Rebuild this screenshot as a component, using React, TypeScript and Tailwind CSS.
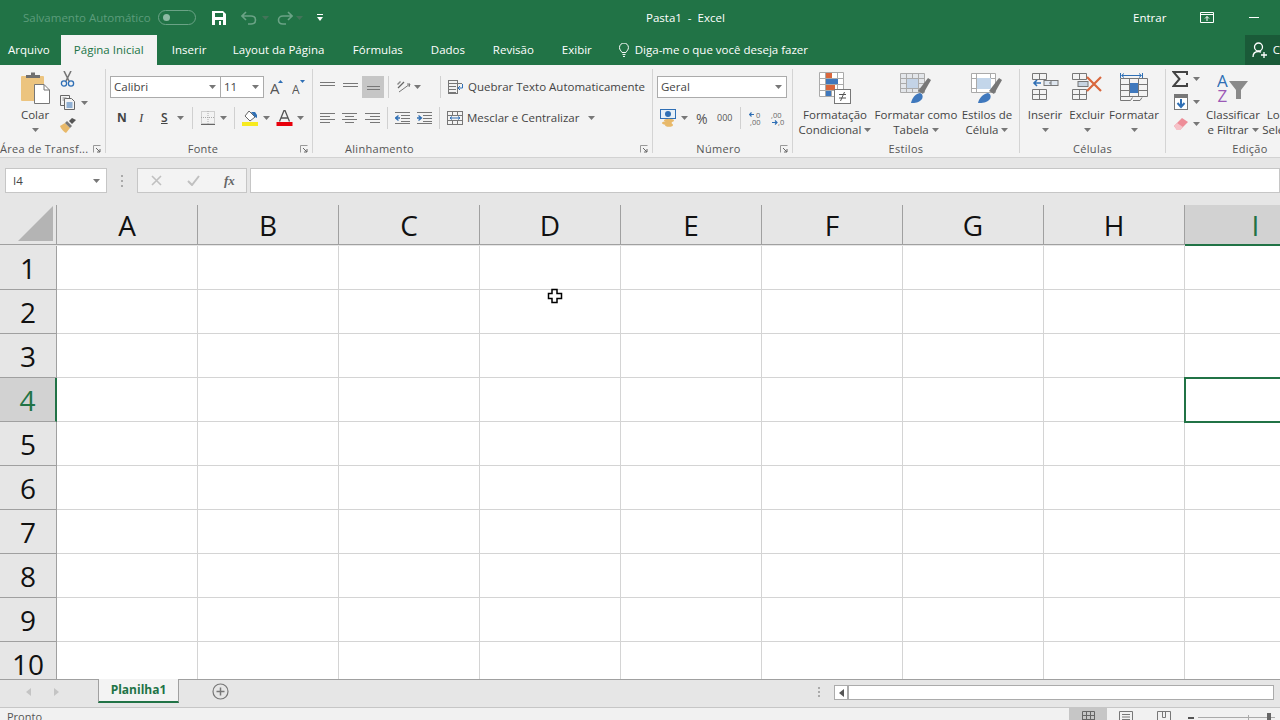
const columns = ['A', 'B', 'C', 'D', 'E', 'F', 'G', 'H', 'I'];
const rows = [1, 2, 3, 4, 5, 6, 7, 8, 9, 10];

const Caret = ({ className = '' }: { className?: string }) => (
  <svg width="7" height="4" viewBox="0 0 7 4" className={`shrink-0 ${className}`}>
    <path d="M0 0h7L3.5 4z" fill="#777" />
  </svg>
);

const Launcher = () => (
  <svg width="8" height="8" viewBox="0 0 8 8" className="shrink-0">
    <path d="M0.5 7.5V0.5H7.5" fill="none" stroke="#999" />
    <path d="M3 3l4 4M7 4v3H4" fill="none" stroke="#666" />
  </svg>
);

const VSep = ({ className = '' }: { className?: string }) => <div className={`h-[22px] w-px shrink-0 bg-[#d0d0d0] ${className}`} />;

function Group({ label, launcher, labelClass = '', className, children }: { label: string; launcher?: boolean; labelClass?: string; className: string; children: React.ReactNode }) {
  return (
    <div className={`flex h-[84px] shrink-0 flex-col border-r border-[#d4d4d4] ${className}`}>
      <div className="h-[73px] shrink-0">{children}</div>
      <div className="flex h-[14px] items-center">
        <div className={`flex-1 text-center text-[11px] leading-[14px] tracking-[0.3px] whitespace-nowrap text-[#555] ${labelClass}`}>{label}</div>
        {launcher && <div className="mr-[4px] flex w-[8px] items-center"><Launcher /></div>}
      </div>
    </div>
  );
}

function BigButton({ icon, lines, caret, className }: { icon: React.ReactNode; lines: string[]; caret?: boolean; className: string }) {
  return (
    <div className={`flex shrink-0 flex-col items-center ${className}`}>
      <div className="mt-[3px] mb-[4px] flex h-[31px] items-center justify-center">{icon}</div>
      {lines.map((line, i) => (
        <div key={i} className="flex h-[15px] items-center gap-[3px] text-[11.5px] leading-[15px] whitespace-nowrap text-[#444]">
          {line}
          {i === 1 && caret && <Caret />}
        </div>
      ))}
      {lines.length === 1 && <div className="flex h-[15px] items-center"><Caret /></div>}
    </div>
  );
}

const PasteIcon = () => (
  <svg width="30" height="32" viewBox="0 0 30 32">
    <rect x="1" y="4" width="23" height="25" rx="1" fill="#ecc47f" />
    <path d="M6 5V3h5V0.5h4V3h5v3H6z" fill="#6f6f6f" />
    <path d="M14.5 12.5H24l5.5 5.5V31.5H14.5z" fill="#fff" stroke="#777" />
    <path d="M24 12.5V18h5.5" fill="none" stroke="#777" />
  </svg>
);
const CutIcon = () => (
  <svg width="15" height="16" viewBox="0 0 15 16">
    <path d="M4 0l5 10M11 0L6 10" stroke="#777" strokeWidth="1.6" />
    <circle cx="4" cy="12.5" r="2.6" fill="none" stroke="#2f6fb5" strokeWidth="1.3" />
    <circle cx="11" cy="12.5" r="2.6" fill="none" stroke="#2f6fb5" strokeWidth="1.3" />
  </svg>
);
const CopyIcon = () => (
  <svg width="15" height="15" viewBox="0 0 15 15" fill="none" stroke="#666">
    <path d="M9.5 3V0.5H0.5v10H4" />
    <path d="M4.5 3.5h7l3 3v8h-10z" fill="#f3f3f3" />
    <path d="M6.5 8h6M6.5 10h6M6.5 12h6" stroke="#2f6fb5" />
    <path d="M2.5 3h4M2.5 5h2" stroke="#888" />
  </svg>
);
const BrushIcon = () => (
  <svg width="16" height="15" viewBox="0 0 16 15">
    <path d="M0 8l5-3 5 5-4 5C4 14 1 11 0 8z" fill="#e8b96a" />
    <path d="M5 5l5 5 2-2-5-5z" fill="#777" />
    <path d="M9 3l3-3 4 2-4 4z" fill="#555" />
  </svg>
);
const GrowIcon = ({ small }: { small?: boolean }) => (
  <svg width="14" height="16" viewBox="0 0 14 16">
    <path d={small ? 'M8 1h5L10.500 4z' : 'M8 4l2.500-3L13 4z'} fill="#2f6fb5" />
    <text x="0" y="15" fontSize={small ? 12 : 15} fill="#555" fontFamily="Open Sans, sans-serif">A</text>
  </svg>
);
const BordersIcon = () => (
  <svg width="14" height="14" viewBox="0 0 14 14" fill="none" stroke="#aaa" strokeDasharray="1 1">
    <rect x="0.5" y="0.5" width="13" height="12" />
    <path d="M7 0v13M0 6.500h14" />
    <path d="M0 13.500h14" stroke="#666" strokeDasharray="none" />
  </svg>
);
const FillIcon = () => (
  <svg width="17" height="17" viewBox="0 0 17 17">
    <path d="M7 1l6 6-5 4-5-5z" fill="#fff" stroke="#666" />
    <path d="M9 2h4l2 3v3l-2-1z" fill="#2f6fb5" />
    <rect x="0" y="12" width="16" height="4" fill="#f7ea1f" />
  </svg>
);
const FontColorIcon = () => (
  <svg width="17" height="17" viewBox="0 0 17 17">
    <path d="M3.500 11.500L8 0.500h1l4.500 11M5.300 8h6.400" fill="none" stroke="#555" strokeWidth="1.300" />
    <rect x="0.500" y="12" width="16" height="4" fill="#e8000b" />
  </svg>
);
const Lines = ({ offsets, width = 15 }: { offsets: [number, number][]; width?: number }) => (
  <svg width={width} height="12" viewBox={`0 0 ${width} 12`} stroke="#777">
    {offsets.map(([x1, x2], i) => <path key={i} d={`M${x1} ${i * 3 + 1.5}H${x2}`} />)}
  </svg>
);
const OrientIcon = () => (
  <svg width="16" height="16" viewBox="0 0 16 16" fill="none">
    <path d="M2 9L8 3" stroke="#666" strokeWidth="1.200" />
    <path d="M3 13L14 5M14 5l-3 0M14 5l-1 3" stroke="#777" />
    <path d="M1 5l3-3 1 1-3 3z" fill="#888" />
  </svg>
);
const IndentIcon = ({ flip }: { flip?: boolean }) => (
  <svg width="15" height="12" viewBox="0 0 15 12" className={flip ? '' : ''}>
    <path d="M0 .5h15M6 3.500h9M6 6.500h9M6 9.500h9M0 11.500h15" stroke="#777" />
    <path d={flip ? 'M0 6h3.500M1.500 3.500L4.500 6l-3 2.500' : 'M5 6H1.500M3.500 3.500L.5 6l3 2.500'} stroke="#2f6fb5" strokeWidth="1.300" fill="none" />
  </svg>
);
const WrapIcon = () => (
  <svg width="16" height="14" viewBox="0 0 16 14" fill="none" stroke="#777">
    <path d="M1 .5h9M1 3.500h13M1 6.500h7M1 9.500h7M1 12.500h7" />
    <rect x="0.500" y="0.500" width="9" height="13" />
    <path d="M14.500 4v4H10M12 6l-2 2 2 2" stroke="#2f6fb5" />
  </svg>
);
const MergeIcon = () => (
  <svg width="16" height="14" viewBox="0 0 16 14" fill="none" stroke="#777">
    <rect x="0.500" y="0.500" width="15" height="13" />
    <path d="M0 4.500h16M0 9.500h16M5.500 0v4M5.500 10v4M10.500 0v4M10.500 10v4" />
    <path d="M3 7h10M5 5.500L3 7l2 1.500M11 5.500L13 7l-2 1.500" stroke="#2f6fb5" />
  </svg>
);
const CurrencyIcon = () => (
  <svg width="17" height="18" viewBox="0 0 17 18">
    <rect x="0.500" y="0.500" width="15" height="9" fill="#e6f0f8" stroke="#2f6fb5" />
    <circle cx="8" cy="5" r="3" fill="#2f6fb5" />
    <ellipse cx="9" cy="11.500" rx="5" ry="1.800" fill="#e8b96a" />
    <ellipse cx="7" cy="14" rx="5" ry="1.800" fill="#e8b96a" />
    <ellipse cx="9" cy="16" rx="4" ry="1.800" fill="#e8b96a" />
  </svg>
);
const DecimalIcon = ({ inc }: { inc?: boolean }) => (
  <svg width="15" height="15" viewBox="0 0 15 15">
    <path d={inc ? 'M5 3.500H1M2.500 1.500l-2 2 2 2' : 'M2 11.500h5M5 9.500l2 2-2 2'} stroke="#2f6fb5" fill="none" strokeWidth="1.200" />
    <text x={inc ? 7 : 1} y="6.500" fontSize="7.500" fill="#666" fontFamily="Open Sans, sans-serif">{inc ? '0' : ',00'}</text>
    <text x={inc ? 1 : 8} y="14" fontSize="7.500" fill="#666" fontFamily="Open Sans, sans-serif">{inc ? ',00' : ',0'}</text>
  </svg>
);
const CondFormatIcon = () => (
  <svg width="32" height="32" viewBox="0 0 32 32">
    <path d="M.5.500h24v24H.500zM.5 6.500h24M.5 12.500h24M.5 18.500h24M6.500.500v24M12.500.500v24M18.500.500v24" fill="#fff" stroke="#aaa" />
    <rect x="7" y="1" width="6" height="5" fill="#d9673d" />
    <rect x="7" y="7" width="12" height="5" fill="#3f78bd" />
    <rect x="7" y="13" width="9" height="5" fill="#d9673d" />
    <rect x="7" y="19" width="5" height="5" fill="#3f78bd" />
    <rect x="15.500" y="17.500" width="16" height="14" fill="#fff" stroke="#777" />
    <path d="M20 22.500h7M20 26h7M25.500 20l-4 9" stroke="#555" fill="none" />
  </svg>
);
const TableBrushIcon = () => (
  <svg width="32" height="32" viewBox="0 0 32 32">
    <path d="M.5 1.500h24v19H.500zM.5 6.500h24M.5 11.500h24M.5 16.500h24M6.500 1.500v19M12.500 1.500v19M18.500 1.500v19" fill="#e3e6ea" stroke="#aaa" />
    <rect x="7" y="7" width="11" height="9" fill="#c3d3e6" />
    <path d="M18 19L28 6l3 2-8 14z" fill="#777" />
    <path d="M11 31c1-5 4-9 9-10 3 1 3 4 2 6-3 4-7 4-11 4z" fill="#3f78bd" />
  </svg>
);
const CellBrushIcon = () => (
  <svg width="32" height="32" viewBox="0 0 32 32">
    <path d="M.5 1.500h24v19H.500zM.5 6.500h5M19.500 6.500h5M.5 16.500h5M5.500 1.500v19M19.500 1.500v5" fill="#fff" stroke="#aaa" />
    <rect x="6" y="6" width="14" height="11" fill="#c3d6ea" />
    <path d="M18 19L28 6l3 2-8 14z" fill="#777" />
    <path d="M7 31c1-5 5-9 10-10 3 1 3 4 2 6-3 4-8 4-12 4z" fill="#3f78bd" />
  </svg>
);
const InsertIcon = () => (
  <svg width="27" height="32" viewBox="0 0 27 32" fill="none" stroke="#777">
    <path d="M.5.500h14v6H.500zM7.500.500v6M.5 16.500h14v10H.500zM.5 21.500h14M7.500 16.500v10" transform="translate(0 1)" />
    <rect x="12" y="8.500" width="14" height="5" fill="#dfe7f0" />
    <path d="M17 11h2M19 8.500v5" />
    <path d="M9 11H2M5 8l-3 3 3 3" stroke="#2f6fb5" strokeWidth="1.600" />
  </svg>
);
const DeleteIcon = () => (
  <svg width="30" height="32" viewBox="0 0 30 32" fill="none" stroke="#777">
    <path d="M.5 1.500h14v6H.500zM7.500 1.500v6M.5 17.500h14v10H.500zM.5 22.500h14M7.500 17.500v10" />
    <rect x="6" y="9.500" width="10" height="5" fill="#c7d3e0" />
    <path d="M15 5l14 14M29 5L15 19" stroke="#d9673d" strokeWidth="2.200" />
  </svg>
);
const FormatIcon = () => (
  <svg width="29" height="32" viewBox="0 0 29 32" fill="none" stroke="#777">
    <path d="M.5 1v5M22.500 1v5M2 3.500h19M4 1.500L1.500 3.500 4 5.500M19 1.500l2.500 2L19 5.500" stroke="#2f6fb5" />
    <path d="M.5 6.500h27v18H.500zM.5 12.500h27M.5 18.500h27M9.500 6.500v18M18.500 6.500v18" />
    <rect x="10" y="11" width="8" height="10" fill="#3f78bd" stroke="none" />
    <path d="M.5 24.500v4h10l2-3M13 28.500h7l2-3" />
  </svg>
);
const SigmaIcon = () => (
  <svg width="16" height="16" viewBox="0 0 16 16">
    <path d="M15 4V1H1.500l6 7-6 7H15v-3" fill="none" stroke="#444" strokeWidth="2" />
  </svg>
);
const FillDownIcon = () => (
  <svg width="14" height="16" viewBox="0 0 14 16">
    <rect x="0.500" y="0.500" width="13" height="15" fill="#fff" stroke="#777" />
    <rect x="0" y="0" width="14" height="4" fill="#777" />
    <path d="M7 5v8M3.500 9L7 13l3.500-4" stroke="#2f6fb5" strokeWidth="2" fill="none" />
  </svg>
);
const EraserIcon = () => (
  <svg width="14" height="14" viewBox="0 0 14 14">
    <path d="M0 9l8-8 6 4-8 8H3z" fill="#ee8d98" />
    <path d="M0 9l3-3 6 4-3 3H3z" fill="#f6c2c8" />
  </svg>
);
const SortFilterIcon = () => (
  <svg width="32" height="32" viewBox="0 0 32 32">
    <text x="0" y="15" fontSize="17" fill="#2f6fb5" fontFamily="Open Sans, sans-serif">A</text>
    <text x="0.500" y="30" fontSize="17" fill="#9b59b6" fontFamily="Open Sans, sans-serif">Z</text>
    <path d="M12 9h19l-7 9v9h-5v-9z" fill="#8a8a8a" />
  </svg>
);
const Cursor = () => (
  <svg width="16" height="16" viewBox="0 0 16 16" className="absolute top-[288px] left-[547px]">
    <path d="M5 1.500h5v4h4.500v5H10v4H5v-4H1.500v-5H5z" fill="#fff" stroke="#000" strokeWidth="1.500" />
  </svg>
);

const tabs = [
  ['Inserir', 'ml-[15px] w-[32px]'],
  ['Layout da Página', 'ml-[29px] w-[91px]'],
  ['Fórmulas', 'ml-[29px] w-[49px]'],
  ['Dados', 'ml-[29px] w-[33px]'],
  ['Revisão', 'ml-[29px] w-[40px]'],
  ['Exibir', 'ml-[29px] w-[28px]'],
];

export default function App() {
  return (
    <div className="relative flex h-[720px] w-[1280px] flex-col overflow-hidden bg-white font-['Open_Sans',sans-serif] text-[12px]">
      {/* title bar */}
      <div className="flex h-[35px] shrink-0 items-center bg-[#217346] text-white">
        <span className="ml-[23px] w-[130px] text-[11.5px] whitespace-nowrap text-[#5c9c7b]">Salvamento Automático</span>
        <div className="ml-[5px] flex h-[15px] w-[38px] items-center rounded-full border border-[#6ba386] pl-[4px]">
          <div className="h-[7px] w-[7px] rounded-full bg-[#8dbaa3]" />
        </div>
        <svg width="14" height="14" viewBox="0 0 14 14" className="ml-[16px]">
          <path d="M0 0h11l3 3v11H0z" fill="#fff" />
          <rect x="3" y="2" width="8" height="4" fill="#217346" />
          <rect x="3" y="9" width="8" height="5" fill="#217346" />
          <rect x="7" y="10" width="2" height="4" fill="#fff" />
        </svg>
        <svg width="17" height="14" viewBox="0 0 17 14" fill="none" stroke="#6ba386" strokeWidth="1.600" className="ml-[15px]">
          <path d="M5 1L1 5l4 4M1 5h9c6 0 6 8 0 8H7" />
        </svg>
        <Caret className="ml-[4px] opacity-40" />
        <svg width="17" height="14" viewBox="0 0 17 14" fill="none" stroke="#6ba386" strokeWidth="1.600" className="ml-[7px]">
          <path d="M12 1l4 4-4 4M16 5H7c-6 0-6 8 0 8h3" />
        </svg>
        <Caret className="ml-[3px] opacity-40" />
        <svg width="6" height="7" viewBox="0 0 6 7" className="ml-[14px]">
          <path d="M0 0h6v1H0zM0 3h6L3 7z" fill="#fff" />
        </svg>
        <span className="ml-[323px] w-[76px] text-center text-[11.5px] whitespace-nowrap">Pasta1&nbsp; -&nbsp; Excel</span>
        <span className="ml-[411px] w-[32px] text-[11.5px]">Entrar</span>
        <svg width="14" height="11" viewBox="0 0 14 11" fill="none" stroke="#fff" className="ml-[35px]">
          <path d="M.5.500h13v10H.500zM.5 2.500h13M7 9V4.500M5 6.500l2-2 2 2" />
        </svg>
        <div className="ml-[35px] h-px w-[10px] bg-white" />
      </div>

      {/* ribbon tabs */}
      <div className="flex h-[30px] shrink-0 items-center bg-[#217346] text-[11.5px] whitespace-nowrap text-white">
        <span className="ml-[8px] w-[42px]">Arquivo</span>
        <div className="ml-[11px] flex h-full w-[97px] items-center justify-center bg-[#f3f3f3] text-[#217346]">Página Inicial</div>
        {tabs.map(([name, cls]) => (
          <span key={name} className={`text-center ${cls}`}>{name}</span>
        ))}
        <svg width="10" height="14" viewBox="0 0 10 14" fill="none" stroke="#fff" className="ml-[29px]">
          <path d="M3 9.500C2 7.500.5 7 .5 4.500a4.500 4.500 0 0 1 9 0C9.500 7 8 7.500 7 9.500zM3.500 11.500h3M4 13.500h2" />
        </svg>
        <span className="ml-[6px] w-[172px]">Diga-me o que você deseja fazer</span>
        <div className="ml-[438px] flex h-full flex-1 items-center bg-[#1a5a38] pl-[7px]">
          <svg width="16" height="16" viewBox="0 0 16 16" fill="none" stroke="#fff" strokeWidth="1.300">
            <circle cx="6.500" cy="5" r="4" />
            <path d="M1 15c0-3.500 2-5.500 5.500-5.500 1 0 2 .3 2.500.7M9 13h6M12 10v6" />
          </svg>
          <span className="ml-[5px]">C</span>
        </div>
      </div>

      {/* ribbon */}
      <div className="flex h-[93px] shrink-0 border-b border-[#d2d2d2] bg-[#f3f3f3] pt-[4px] whitespace-nowrap text-[#444]">
        <Group label="Área de Transf..." launcher className="w-[106px]" labelClass="text-left">
          <div className="flex">
            <BigButton className="ml-[10px] w-[50px]" icon={<PasteIcon />} lines={['Colar']} />
            <div className="flex flex-col">
              <div className="mt-[2px] h-[16px]"><CutIcon /></div>
              <div className="mt-[8px] flex h-[15px] items-center gap-[6px]"><CopyIcon /><Caret /></div>
              <div className="mt-[8px] h-[15px]"><BrushIcon /></div>
            </div>
          </div>
        </Group>

        <Group label="Fonte" launcher className="w-[207px]">
          <div className="flex h-[22px] items-center pt-0 mt-[7px]">
            <div className="ml-[4px] flex h-[22px] w-[111px] items-center border border-[#ababab] bg-white pl-[3px] text-[11.5px]">
              <span className="flex-1">Calibri</span><Caret className="mr-[4px]" />
            </div>
            <div className="flex h-[22px] w-[43px] items-center border border-l-0 border-[#ababab] bg-white pl-[3px] text-[11.5px]">
              <span className="flex-1">11</span><Caret className="mr-[4px]" />
            </div>
            <div className="ml-[6px]"><GrowIcon /></div>
            <div className="ml-[8px]"><GrowIcon small /></div>
          </div>
          <div className="mt-[9px] flex h-[22px] items-center text-[12px] text-[#444]">
            <span className="ml-[11px] w-[8px] font-['Open_Sans',sans-serif] font-bold">N</span>
            <span className="ml-[14px] w-[8px] font-['Liberation_Serif',serif] text-[13px] italic">I</span>
            <span className="ml-[14px] w-[9px] font-semibold underline">S</span>
            <Caret className="ml-[7px]" />
            <VSep className="ml-[8px]" />
            <div className="ml-[8px]"><BordersIcon /></div>
            <Caret className="ml-[5px]" />
            <VSep className="ml-[7px]" />
            <div className="ml-[7px]"><FillIcon /></div>
            <Caret className="ml-[4px]" />
            <div className="ml-[6px]"><FontColorIcon /></div>
            <Caret className="ml-[4px]" />
          </div>
        </Group>

        <Group label="Alinhamento" launcher className="w-[340px]" labelClass="mr-[191px] ml-[-3px]">
          <div className="mt-[7px] flex h-[22px] items-center">
            <div className="ml-[7px]"><Lines offsets={[[0, 15], [0, 15]]} /></div>
            <div className="ml-[8px] mt-[1px]"><Lines offsets={[[0, 15], [0, 15]]} /></div>
            <div className="ml-[4px] flex h-[22px] w-[22px] items-end justify-center bg-[#c6c6c6] pb-[1px]"><Lines offsets={[[0, 13], [0, 13]]} width={13} /></div>
            <VSep className="ml-[4px]" />
            <div className="ml-[7px]"><OrientIcon /></div>
            <Caret className="ml-[2px]" />
            <VSep className="ml-[19px]" />
            <div className="ml-[7px]"><WrapIcon /></div>
            <span className="ml-[4px] text-[11.5px] text-[#444]">Quebrar Texto Automaticamente</span>
          </div>
          <div className="mt-[9px] flex h-[22px] items-center">
            <div className="ml-[7px]"><Lines offsets={[[0, 15], [0, 10], [0, 15], [0, 10]]} /></div>
            <div className="ml-[7px]"><Lines offsets={[[0, 15], [3, 12], [0, 15], [3, 12]]} /></div>
            <div className="ml-[8px]"><Lines offsets={[[0, 15], [5, 15], [0, 15], [5, 15]]} /></div>
            <VSep className="ml-[7px]" />
            <div className="ml-[7px]"><IndentIcon /></div>
            <div className="ml-[7px]"><IndentIcon flip /></div>
            <VSep className="ml-[7px]" />
            <div className="ml-[7px]"><MergeIcon /></div>
            <span className="ml-[4px] text-[11.5px] text-[#444]">Mesclar e Centralizar</span>
            <Caret className="ml-[9px]" />
          </div>
        </Group>

        <Group label="Número" launcher className="w-[140px]" labelClass="mr-[-4px]">
          <div className="mt-[7px] ml-[4px] flex h-[22px] w-[130px] items-center border border-[#ababab] bg-white pl-[3px] text-[11.5px]">
            <span className="flex-1">Geral</span><Caret className="mr-[4px]" />
          </div>
          <div className="mt-[9px] flex h-[22px] items-center text-[#555]">
            <div className="ml-[7px]"><CurrencyIcon /></div>
            <Caret className="ml-[4px]" />
            <span className="ml-[8px] w-[14px] text-[14px]">%</span>
            <span className="ml-[7px] w-[15px] text-[9px]">000</span>
            <VSep className="ml-[8px]" />
            <div className="ml-[8px]"><DecimalIcon inc /></div>
            <div className="ml-[6px]"><DecimalIcon /></div>
          </div>
        </Group>

        <Group label="Estilos" className="w-[227px]">
          <div className="flex pl-[4px]">
            <BigButton className="w-[76px]" icon={<CondFormatIcon />} lines={['Formatação', 'Condicional']} caret />
            <BigButton className="w-[86px]" icon={<TableBrushIcon />} lines={['Formatar como', 'Tabela']} caret />
            <BigButton className="w-[56px]" icon={<CellBrushIcon />} lines={['Estilos de', 'Célula']} caret />
          </div>
        </Group>

        <Group label="Células" className="w-[146px]">
          <div className="flex pl-[5px]">
            <BigButton className="w-[40px]" icon={<InsertIcon />} lines={['Inserir']} />
            <BigButton className="w-[44px]" icon={<DeleteIcon />} lines={['Excluir']} />
            <BigButton className="w-[50px]" icon={<FormatIcon />} lines={['Formatar']} />
          </div>
        </Group>

        <Group label="Edição" className="w-[168px] border-r-0">
          <div className="flex">
            <div className="ml-[6px] flex w-[34px] flex-col">
              <div className="mt-[2px] flex h-[16px] items-center gap-[5px]"><SigmaIcon /><Caret /></div>
              <div className="mt-[7px] flex h-[16px] items-center gap-[5px] pl-[2px]"><FillDownIcon /><Caret /></div>
              <div className="mt-[7px] flex h-[14px] items-center gap-[5px] pl-[2px]"><EraserIcon /><Caret /></div>
            </div>
            <BigButton className="w-[54px]" icon={<SortFilterIcon />} lines={['Classificar', 'e Filtrar']} caret />
            <BigButton className="w-[70px]" icon={<div className="w-[32px]" />} lines={['Localizar e', 'Selecionar']} caret />
          </div>
        </Group>
      </div>

      {/* formula bar */}
      <div className="flex h-[47px] shrink-0 items-start bg-[#e6e6e6] pt-[10px]">
        <div className="ml-[5px] flex h-[25px] w-[102px] items-center border border-[#c6c6c6] bg-white pl-[7px] text-[11.5px] text-[#444]">
          <span className="flex-1">I4</span><Caret className="mr-[6px]" />
        </div>
        <div className="ml-[14px] flex h-[25px] flex-col justify-center gap-[3px]">
          <div className="h-[2px] w-[2px] bg-[#aaa]" />
          <div className="h-[2px] w-[2px] bg-[#aaa]" />
          <div className="h-[2px] w-[2px] bg-[#aaa]" />
        </div>
        <div className="ml-[14px] flex h-[25px] w-[110px] items-center border border-[#c6c6c6] bg-[#f3f3f3]">
          <svg width="11" height="11" viewBox="0 0 11 11" className="ml-[13px]">
            <path d="M1 1l9 9M10 1l-9 9" stroke="#c0c0c0" strokeWidth="1.600" />
          </svg>
          <svg width="13" height="11" viewBox="0 0 13 11" className="ml-[25px]">
            <path d="M1 6l4 4 7-9" stroke="#c0c0c0" strokeWidth="2" fill="none" />
          </svg>
          <span className="ml-[24px] font-['Liberation_Serif',serif] text-[13px] font-semibold text-[#666] italic">fx</span>
        </div>
        <div className="ml-[3px] h-[25px] flex-1 border border-[#c6c6c6] bg-white" />
      </div>

      {/* column headers */}
      <div className="flex h-[41px] shrink-0 bg-[#e6e6e6] font-['Open_Sans',sans-serif] text-[28px] text-[#111]">
        <div className="flex h-[40px] w-[57px] shrink-0 items-end justify-end border-r border-b border-[#a0a0a0] pr-[3px] pb-[3px]">
          <svg width="35" height="35" viewBox="0 0 35 35"><path d="M35 0v35H0z" fill="#b4b4b4" /></svg>
        </div>
        {columns.map((col) => (
          <div
            key={col}
            className={col === 'I'
              ? 'flex h-[41px] w-[141px] shrink-0 items-center justify-center border-b-2 border-[#217346] bg-[#d2d2d2] text-[#217346]'
              : 'flex h-[40px] w-[141px] shrink-0 items-center justify-center border-r border-b border-[#a0a0a0]'}
          >
            {col}
          </div>
        ))}
      </div>

      {/* sheet */}
      <div className="h-[433px] shrink-0 overflow-hidden">
        {rows.map((row) => (
          <div key={row} className="flex h-[44px]">
            <div className={row === 4
              ? 'flex w-[57px] shrink-0 items-center justify-center border-r-2 border-b border-r-[#217346] border-b-[#a0a0a0] bg-[#d2d2d2] text-[28px] text-[#217346]'
              : 'flex w-[57px] shrink-0 items-center justify-center border-r border-b border-[#a0a0a0] bg-[#e6e6e6] text-[28px] text-[#111]'}
            >
              {row}
            </div>
            {columns.map((col) => (
              <div
                key={col}
                className={col === 'I' && row === 4
                  ? 'z-10 -mt-px -ml-px h-[46px] w-[142px] shrink-0 border-2 border-[#217346] bg-white'
                  : 'w-[141px] shrink-0 border-r border-b border-[#d4d4d4]'}
              />
            ))}
          </div>
        ))}
      </div>

      {/* sheet tabs */}
      <div className="flex h-[28px] shrink-0 items-start border-t border-[#a0a0a0] bg-[#e6e6e6]">
        <svg width="6" height="8" viewBox="0 0 6 8" className="mt-[8px] ml-[26px]"><path d="M5 0v8L0 4z" fill="#c4c4c4" /></svg>
        <svg width="6" height="8" viewBox="0 0 6 8" className="mt-[8px] ml-[22px]"><path d="M0 0v8l5-4z" fill="#c4c4c4" /></svg>
        <div className="-mt-px ml-[38px] flex h-[24px] w-[81px] items-center justify-center border-x border-b-2 border-x-[#a0a0a0] border-b-[#217346] bg-[#f3f3f3] text-[12px] font-bold text-[#217346]">Planilha1</div>
        <svg width="17" height="17" viewBox="0 0 17 17" className="mt-[3px] ml-[33px]" fill="none" stroke="#777">
          <circle cx="8.500" cy="8.500" r="7.500" strokeWidth="1.200" />
          <path d="M4.500 8.500h8M8.500 4.500v8" strokeWidth="1.500" />
        </svg>
        <div className="mt-[7px] ml-[589px] flex flex-col gap-[2px]">
          <div className="h-[2px] w-[2px] bg-[#aaa]" />
          <div className="h-[2px] w-[2px] bg-[#aaa]" />
          <div className="h-[2px] w-[2px] bg-[#aaa]" />
        </div>
        <div className="mt-[5px] ml-[14px] flex h-[15px] w-[440px] border border-[#ababab] bg-white">
          <div className="flex w-[14px] items-center justify-center border-r-2 border-[#ababab]">
            <svg width="5" height="8" viewBox="0 0 5 8"><path d="M5 0v8L0 4z" fill="#555" /></svg>
          </div>
        </div>
      </div>

      {/* status bar */}
      <div className="flex h-[13px] flex-1 items-start border-t border-[#c6c6c6] bg-[#f1f1f1] text-[#555]">
        <span className="ml-[7px] text-[11px] leading-[18px]">Pronto</span>
        <div className="ml-[1027px] flex h-[14px] w-[38px] justify-center bg-[#c6c6c6] pt-[3px]">
          <svg width="13" height="11" viewBox="0 0 13 11" fill="none" stroke="#666"><path d="M.5.500h12v11H.500zM.5 4.500h12M.5 8.500h12M4.500.500v11M8.500.500v11" /></svg>
        </div>
        <svg width="14" height="11" viewBox="0 0 14 11" fill="none" stroke="#777" className="mt-[3px] ml-[12px]"><path d="M.5.500h13v11H.500zM3 3.500h8M3 6h8M3 8.500h8" /></svg>
        <svg width="14" height="11" viewBox="0 0 14 11" fill="none" stroke="#777" className="mt-[3px] ml-[24px]"><path d="M.5 11V.500h13V11M5.500.500v6h3v-6" /></svg>
        <div className="mt-[9px] ml-[17px] h-[2px] w-[6px] bg-[#555]" />
        <div className="mt-[9px] ml-[4px] flex h-px w-[77px] items-center bg-[#aaa]">
          <div className="ml-[50px] h-[5px] w-px bg-[#aaa]" />
          <div className="ml-[18px] h-[9px] w-[4px] shrink-0 bg-[#666]" />
        </div>
      </div>

      <Cursor />
    </div>
  );
}
